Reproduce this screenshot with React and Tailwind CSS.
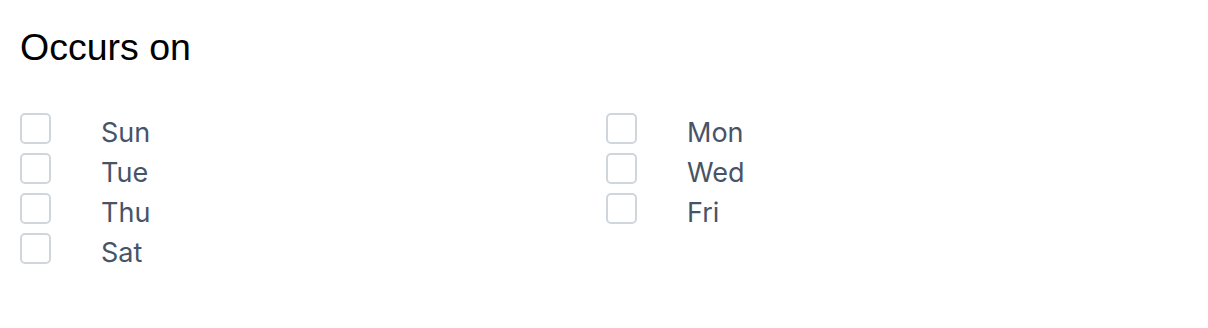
export default function App() {
  const days = ["Sun", "Mon", "Tue", "Wed", "Thu", "Fri", "Sat"];
  return (
    <div className="w-[1208px] h-[328px] bg-white px-5 pt-[23px]">
      <h2 className="text-[37.5px] leading-[48px] text-black" style={{ fontFamily: '"Liberation Sans", Arial, sans-serif' }}>
        Occurs on
      </h2>
      <div className="mt-[37px] grid grid-cols-2 gap-x-1" style={{ fontFamily: 'Inter, sans-serif' }}>
        {days.map((d) => (
          <label key={d} className="flex items-center h-10">
            <span className="w-[31px] h-[31px] rounded-[5px] border-2 border-gray-300 bg-white shrink-0" />
            <span className="ml-[50px] text-[27px] leading-10 text-[#475467] translate-y-[5px]">{d}</span>
          </label>
        ))}
      </div>
    </div>
  );
}
